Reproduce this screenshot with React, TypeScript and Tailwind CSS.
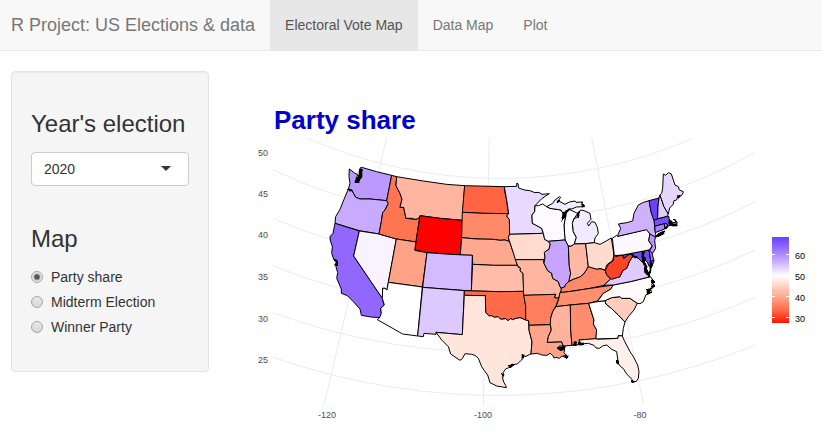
import React from "react";

type Region = { id: string; fill: string; d: string };

// State outlines, drawn on a grid of three units to the pixel.
const regions: Region[] = [
  { id: "WA", fill: "#bb99ff", d: "1048,507 1065,520 1073,523 1070,534 1067,546 1074,548 1081,534 1083,520 1080,504 1085,502 1130,515 1175,526 1168,564 1160,602 1110,597 1080,597 1067,592 1060,580 1055,570 1045,568 1050,550 1047,530" },
  { id: "OR", fill: "#c8aaff", d: "1045,568 1055,570 1060,580 1067,592 1080,597 1110,597 1160,602 1165,610 1155,630 1148,638 1144,665 1137,702 1078,692 1005,670 1007,650 1020,628 1032,598 1043,572" },
  { id: "CA", fill: "#9167ff", d: "1005,670 1078,693 1061,768 1147,895 1153,915 1142,925 1144,940 1139,953 1112,951 1084,946 1080,927 1060,905 1042,887 1024,880 1024,868 1019,855 1010,835 1013,818 1008,800 1004,795 1009,787 1002,780 995,760 997,740 991,722 990,710 999,700" },
  { id: "NV", fill: "#f8f3ff", d: "1078,693 1137,702 1189,717 1165,847 1161,870 1155,865 1148,865 1147,895 1061,768" },
  { id: "ID", fill: "#ff7551", d: "1175,526 1190,530 1188,557 1200,580 1206,598 1200,622 1211,622 1218,655 1245,658 1254,656 1256,647 1260,647 1248,726 1189,717 1137,702 1144,665 1148,638 1155,630 1165,610 1160,602" },
  { id: "MT", fill: "#ffb59f", d: "1190,530 1270,543 1340,553 1394,557 1387,661 1320,655 1260,647 1255,656 1245,658 1237,655 1218,655 1211,622 1200,622 1206,598 1200,580 1188,557" },
  { id: "WY", fill: "#ff0000", d: "1260,647 1320,655 1387,661 1381,766 1280,757 1244,750" },
  { id: "ND", fill: "#ff6542", d: "1394,557 1513,560 1514,574 1520,600 1523,625 1526,641 1450,640 1387,637" },
  { id: "SD", fill: "#ff8a6a", d: "1387,637 1450,640 1526,641 1520,648 1528,658 1529,703 1525,712 1529,725 1515,720 1500,721 1480,718 1430,717 1385,713" },
  { id: "NE", fill: "#ffaa90", d: "1385,713 1430,717 1480,718 1500,721 1515,720 1529,725 1540,758 1548,778 1552,796 1480,796 1418,793 1417,766 1381,765" },
  { id: "UT", fill: "#ffa286", d: "1189,717 1248,726 1244,751 1281,758 1267,861 1165,847" },
  { id: "CO", fill: "#d4bbff", d: "1281,758 1350,763 1417,766 1414,873 1268,862" },
  { id: "AZ", fill: "#ffffff", d: "1165,847 1267,861 1253,1008 1208,1002 1132,959 1139,953 1144,940 1142,925 1153,915 1147,895 1148,865 1155,865 1161,870" },
  { id: "NM", fill: "#ddc8ff", d: "1268,862 1393,872 1387,1004 1308,997 1308,1003 1272,1000 1270,1010 1253,1008" },
  { id: "KS", fill: "#ffbda9", d: "1418,793 1480,796 1552,796 1555,802 1562,805 1560,812 1569,820 1571,874 1500,875 1414,873" },
  { id: "OK", fill: "#ff6b49", d: "1393,872 1500,875 1571,874 1577,918 1577,960 1560,953 1545,956 1538,959 1532,956 1524,962 1517,956 1502,958 1494,950 1483,952 1475,947 1468,948 1457,938 1456,887 1393,886" },
  { id: "TX", fill: "#ffe5dc", d: "1393,886 1456,887 1457,938 1468,948 1475,947 1483,952 1494,950 1502,958 1517,956 1524,962 1532,956 1538,959 1545,956 1560,953 1577,960 1586,962 1587,990 1596,1025 1593,1062 1575,1070 1570,1066 1570,1075 1562,1082 1552,1092 1538,1094 1530,1102 1518,1106 1509,1118 1512,1125 1507,1132 1512,1148 1517,1156 1519,1163 1508,1161 1490,1158 1470,1148 1463,1125 1453,1112 1445,1100 1435,1075 1425,1066 1415,1063 1395,1061 1387,1076 1380,1081 1352,1062 1345,1040 1325,1020 1308,997 1387,1004" },
  { id: "MN", fill: "#e9d9ff", d: "1513,560 1550,559 1550,550 1554,551 1556,564 1573,570 1590,572 1605,578 1617,577 1626,583 1648,581 1625,596 1605,617 1604,635 1596,645 1597,670 1607,675 1625,685 1630,700 1529,703 1528,658 1520,648 1526,641 1520,600" },
  { id: "IA", fill: "#ffdace", d: "1529,703 1630,700 1634,718 1645,724 1651,732 1647,748 1633,757 1635,773 1630,779 1546,779 1540,758 1529,725 1525,712" },
  { id: "MO", fill: "#ffb59f", d: "1546,779 1630,779 1632,790 1643,812 1655,820 1658,835 1675,845 1680,860 1685,868 1680,880 1676,895 1663,893 1667,883 1630,885 1571,886 1569,820 1560,812 1562,805 1553,797" },
  { id: "WI", fill: "#fcfaff", d: "1605,617 1615,617 1628,612 1640,620 1650,625 1683,630 1690,640 1686,655 1693,652 1697,646 1692,675 1695,720 1645,724 1634,718 1630,700 1625,685 1607,675 1597,670 1596,645 1604,635" },
  { id: "UP", fill: "#f2eaff", d: "1640,620 1658,610 1665,600 1678,590 1682,592 1671,607 1678,604 1695,613 1708,606 1725,603 1728,607 1748,606 1745,614 1753,620 1730,621 1715,627 1705,627 1702,635 1690,642 1683,630 1650,625" },
  { id: "MI", fill: "#f2eaff", d: "1723,732 1729,712 1720,695 1717,670 1722,656 1732,652 1733,638 1743,630 1752,632 1770,640 1773,658 1762,670 1766,678 1775,665 1785,667 1792,682 1795,700 1785,714 1783,728 1755,731" },
  { id: "IL", fill: "#c7a4ff", d: "1645,724 1695,720 1705,738 1708,800 1712,820 1708,845 1697,853 1694,861 1684,864 1680,860 1675,845 1658,835 1655,820 1643,812 1632,790 1635,773 1633,757 1647,748 1651,732" },
  { id: "IN", fill: "#ffb8a3", d: "1705,738 1713,739 1723,732 1757,731 1765,800 1758,812 1750,823 1740,831 1727,836 1720,838 1706,845 1712,820 1708,800" },
  { id: "OH", fill: "#ffdace", d: "1757,731 1783,728 1800,733 1815,725 1834,714 1842,765 1838,781 1820,795 1816,810 1800,806 1790,808 1765,801" },
  { id: "KY", fill: "#ff8a6a", d: "1684,864 1694,861 1697,853 1706,845 1720,838 1740,831 1750,823 1758,812 1765,800 1790,808 1800,806 1816,811 1820,825 1832,837 1812,856 1765,866 1720,873 1683,878" },
  { id: "TN", fill: "#ff906f", d: "1680,878 1720,873 1765,866 1840,855 1832,868 1810,880 1792,903 1766,910 1711,915 1668,920 1676,897" },
  { id: "AR", fill: "#ff7f5e", d: "1571,886 1667,883 1663,893 1676,895 1668,918 1658,935 1652,955 1651,974 1587,976 1586,962 1577,960 1577,918" },
  { id: "LA", fill: "#ffa48a", d: "1587,976 1651,974 1654,990 1645,1010 1642,1027 1685,1025 1690,1038 1678,1038 1672,1046 1683,1050 1694,1048 1692,1058 1700,1066 1697,1073 1686,1068 1678,1075 1668,1072 1662,1074 1658,1066 1650,1060 1641,1066 1625,1065 1612,1060 1593,1062 1596,1025 1587,990" },
  { id: "MS", fill: "#ffb39c", d: "1668,920 1711,915 1712,990 1716,1036 1690,1038 1685,1025 1642,1027 1645,1010 1654,990 1651,974 1652,955 1658,935" },
  { id: "AL", fill: "#ff8d6e", d: "1711,915 1766,910 1772,930 1782,960 1780,972 1790,990 1788,1017 1737,1020 1743,1030 1730,1036 1725,1024 1721,1036 1716,1036 1712,990" },
  { id: "GA", fill: "#fffefe", d: "1766,910 1792,905 1815,902 1818,912 1835,926 1855,945 1875,966 1870,985 1867,1008 1855,1007 1854,1015 1792,1017 1788,1013 1790,990 1780,972 1782,960" },
  { id: "FL", fill: "#fff0eb", d: "1737,1020 1788,1016 1792,1018 1854,1015 1855,1007 1867,1008 1873,1022 1890,1055 1900,1070 1913,1095 1917,1115 1915,1135 1909,1144 1898,1147 1896,1138 1880,1122 1870,1106 1862,1100 1855,1090 1853,1077 1850,1055 1835,1048 1820,1035 1808,1038 1798,1045 1788,1044 1782,1036 1765,1030 1743,1032" },
  { id: "SC", fill: "#ffcdbd", d: "1815,902 1835,893 1860,890 1865,895 1890,895 1912,910 1902,930 1885,950 1875,966 1855,945 1835,926 1818,912" },
  { id: "NC", fill: "#fff9f7", d: "1840,855 1895,844 1951,830 1960,842 1955,854 1962,860 1950,866 1955,875 1938,884 1930,905 1920,911 1912,910 1890,895 1865,895 1860,890 1835,893 1815,902 1792,905 1810,880 1832,868" },
  { id: "VA", fill: "#e0cbff", d: "1812,856 1832,837 1860,830 1868,812 1880,805 1888,785 1900,766 1915,775 1928,785 1934,800 1934,818 1951,830 1895,844 1840,855" },
  { id: "WV", fill: "#ff4325", d: "1842,752 1846,770 1868,765 1871,775 1888,762 1900,766 1888,785 1880,805 1868,812 1860,830 1835,838 1820,825 1816,811 1825,793 1840,782 1842,765" },
  { id: "MD", fill: "#754aff", d: "1868,765 1947,749 1952,782 1962,782 1955,802 1948,800 1941,785 1930,778 1928,788 1915,775 1900,766 1888,762 1871,775" },
  { id: "DE", fill: "#9a74ff", d: "1947,749 1954,752 1962,782 1952,782" },
  { id: "PA", fill: "#fbf8ff", d: "1837,715 1850,706 1853,709 1940,688 1950,702 1946,722 1957,738 1947,750 1868,765 1843,767" },
  { id: "NJ", fill: "#bb98ff", d: "1950,702 1967,709 1964,722 1967,745 1958,760 1949,752 1957,738 1946,722" },
  { id: "NY", fill: "#cdb1ff", d: "1853,706 1862,685 1855,672 1880,668 1898,663 1902,640 1915,615 1930,607 1948,602 1953,635 1963,662 1964,682 1967,704 1964,710 1950,702 1940,689 1853,709" },
  { id: "VT", fill: "#6c40ff", d: "1947,602 1977,594 1974,620 1973,656 1961,660 1953,635" },
  { id: "NH", fill: "#e1ceff", d: "1977,594 1980,585 1992,620 2005,642 1999,650 1973,656 1974,620" },
  { id: "MA", fill: "#784fff", d: "1962,660 1999,650 2006,648 2008,660 2018,668 2027,667 2025,659 2032,668 2028,675 2012,675 2006,678 1998,670 1964,679" },
  { id: "CT", fill: "#a781ff", d: "1964,679 1993,671 1994,687 1966,698" },
  { id: "RI", fill: "#a781ff", d: "1993,671 1998,670 2004,678 2001,684 1994,687" },
  { id: "ME", fill: "#e5d5ff", d: "1980,585 1985,580 1988,565 1990,522 1997,526 2005,518 2014,522 2025,555 2035,560 2038,570 2050,575 2047,584 2037,592 2034,586 2030,600 2022,602 2019,614 2009,624 2005,642 1992,620" },
];

// Bays, sounds and islands where the coast is too dense to show as a line.
const inlets = [
  "1064,548 1068,534 1075,530 1076,520 1078,508 1087,508 1087,532 1081,537 1077,549",
  "1003,778 1012,779 1014,798 1004,796 1009,787",
  "1083,505 1090,512 1081,514",
  "1688,638 1701,630 1712,626 1706,634 1697,638 1699,650 1690,656 1685,666 1688,650",
  "1673,600 1681,602 1671,610",
  "1733,640 1740,632 1736,653 1730,652",
  "1744,608 1756,617 1747,622",
  "1524,1097 1538,1091 1545,1094 1532,1103",
  "1565,1063 1574,1064 1566,1078",
  "1504,1120 1512,1123 1509,1133",
  "1672,1042 1697,1038 1693,1049 1680,1053",
  "1690,1065 1706,1068 1700,1077",
  "1722,1025 1730,1026 1728,1038 1720,1036",
  "1734,1027 1752,1029 1751,1035 1737,1036",
  "1848,1080 1857,1083 1855,1094 1849,1089",
  "1894,1140 1905,1145 1895,1149",
  "1926,754 1935,756 1931,766 1938,776 1934,786 1942,800 1940,806 1950,822 1941,825 1932,808 1936,800 1928,785 1925,770",
  "1949,782 1957,790 1952,820 1947,824 1950,803",
  "1936,816 1950,824 1946,832",
  "1955,836 1966,846 1960,850 1966,858 1956,866 1953,858 1961,855 1954,848",
  "1939,868 1957,865 1948,876 1957,878 1942,884",
  "1967,707 1980,697 1995,692 1992,702 1980,708 1967,713",
  "2008,658 2016,664 2020,674 2030,671 2033,678 2018,679 2008,676 2005,668",
  "1993,681 2004,678 2000,688",
  "2018,659 2026,657 2027,661",
  "2032,588 2042,585 2036,596",
  "1041,568 1050,566 1058,573 1050,574",
  "1895,760 1902,768 1913,770 1908,775 1897,771",
];

const yTicks = [
  { label: "50", y: 156 },
  { label: "45", y: 197 },
  { label: "40", y: 238 },
  { label: "35", y: 280 },
  { label: "30", y: 322 },
  { label: "25", y: 363 },
];

const xTicks = [
  { label: "-120", x: 327 },
  { label: "-100", x: 483 },
  { label: "-80", x: 640 },
];

const legendTicks = [
  { label: "60", y: 254 },
  { label: "50", y: 275 },
  { label: "40", y: 296 },
  { label: "30", y: 317 },
];

const tabs = ["Electoral Vote Map", "Data Map", "Plot"];
const mapOptions = ["Party share", "Midterm Election", "Winner Party"];

function Navbar() {
  return (
    <nav className="flex h-[51px] items-stretch border-b border-[#e7e7e7] bg-[#f8f8f8] text-sm text-[#777]">
      <a href="#home" className="flex items-center pr-[15px] pl-[11px] text-lg whitespace-nowrap">
        R Project: US Elections &amp; data
      </a>
      {tabs.map((tab, i) => (
        <a
          key={tab}
          href={"#tab-" + i}
          className={
            i === 0
              ? "flex items-center bg-[#e7e7e7] px-[15px] whitespace-nowrap text-[#555]"
              : "flex items-center px-[15px] whitespace-nowrap"
          }
        >
          {tab}
        </a>
      ))}
    </nav>
  );
}

function Sidebar() {
  const [choice, setChoice] = React.useState(mapOptions[0]);
  return (
    <form className="w-[198px] shrink-0 rounded border border-[#e3e3e3] bg-[#f5f5f5] px-[19px] pt-[39px] pb-[34px] shadow-[inset_0_1px_1px_rgba(0,0,0,0.05)]">
      <h3 className="text-2xl leading-[26px]">
        <label htmlFor="year">Year's election</label>
      </h3>
      <div className="relative mt-[15px]">
        <select
          id="year"
          defaultValue="2020"
          className="h-[34px] w-full appearance-none rounded border border-[#ccc] bg-white px-3 text-sm text-[#333]"
        >
          <option>2020</option>
          <option>2016</option>
        </select>
        <svg className="pointer-events-none absolute top-[14px] right-[18px]" width="10" height="5" viewBox="0 0 10 5">
          <path d="M0 0H10L5 5Z" fill="#333" />
        </svg>
      </div>
      <fieldset className="mt-10">
        <legend className="text-2xl leading-[26px]">Map</legend>
        <div className="mt-[15px] flex flex-col gap-[5px]">
          {mapOptions.map((option) => (
            <label key={option} className="flex items-center gap-2 text-sm leading-5">
              <input
                type="radio"
                name="map"
                value={option}
                checked={choice === option}
                onChange={() => setChoice(option)}
                className="h-3 w-3 appearance-none rounded-full border border-[#a6a6a6] bg-linear-to-b from-[#e8e8e8] to-[#d8d8d8] checked:bg-[radial-gradient(circle,#555_0,#555_2px,#e6e6e6_4px)]"
              />
              {option}
            </label>
          ))}
        </div>
      </fieldset>
    </form>
  );
}

function ElectionMap() {
  return (
    <svg
      className="block w-full font-['Liberation_Sans',Arial,sans-serif]"
      viewBox="240 136 582 290"
      role="img"
      aria-label="Party share by state"
    >
      <defs>
        <linearGradient id="share" x1="0" y1="0" x2="0" y2="1">
          <stop offset="0" stopColor="#6a40ff" />
          <stop offset="0.15" stopColor="#9c75ff" />
          <stop offset="0.3" stopColor="#cfb5ff" />
          <stop offset="0.45" stopColor="#ffffff" />
          <stop offset="0.58" stopColor="#ffd0c1" />
          <stop offset="0.72" stopColor="#ff9f83" />
          <stop offset="0.86" stopColor="#ff6542" />
          <stop offset="1" stopColor="#ff1505" />
        </linearGradient>
      </defs>
      <g transform="scale(0.333333)">
        <g fill="none" stroke="#ebebeb" strokeWidth="3">
          <path d="M923 415A1447 1447 0 0 0 2078 415" />
          <path d="M820 510A1567 1567 0 0 0 2266 457" />
          <path d="M820 655A1687 1687 0 0 0 2266 605" />
          <path d="M820 798A1807 1807 0 0 0 2266 750" />
          <path d="M820 938A1927 1927 0 0 0 2266 892" />
          <path d="M820 1072A2046 2046 0 0 0 2266 1035" />
          <path d="M1160 413L973 1213M1468 413L1450 1213M1775 413L1930 1213" />
        </g>
        <g stroke="#000" strokeWidth="3" strokeLinejoin="round" shapeRendering="crispEdges">
          <polygon fill="#fff" points="1695,720 1705,738 1713,739 1723,732 1729,712 1720,695 1717,670 1722,656 1733,640 1705,627 1697,646 1692,675" />
          {regions.map((r) => (
            <polygon key={r.id} points={r.d} fill={r.fill} />
          ))}
        </g>
        <g fill="#000" stroke="#000" strokeWidth="1" shapeRendering="crispEdges">
          {inlets.map((d) => (
            <polygon key={d} points={d} />
          ))}
        </g>
      </g>
      <g fill="#4d4d4d" fontSize="9">
        {yTicks.map((t) => (
          <text key={t.label} x="268" y={t.y} textAnchor="end">
            {t.label}
          </text>
        ))}
        {xTicks.map((t) => (
          <text key={t.label} x={t.x} y="418" textAnchor="middle">
            {t.label}
          </text>
        ))}
      </g>
      <rect x="772" y="237" width="17" height="86" fill="url(#share)" />
      {legendTicks.map((t) => (
        <g key={t.label}>
          <path d={`M772 ${t.y}h3v1h-3zM786 ${t.y}h3v1h-3z`} fill="#fff" />
          <text x="795" y={t.y + 5} fontSize="9" fill="#000">
            {t.label}
          </text>
        </g>
      ))}
    </svg>
  );
}

export default function App() {
  return (
    <div className="min-h-screen bg-white font-['Liberation_Sans',Arial,sans-serif] text-[#333]">
      <Navbar />
      <div className="flex items-start gap-[31px] pt-5 pl-[11px]">
        <Sidebar />
        <main className="min-w-0 flex-1 pt-[33px]">
          <h2 className="pl-[34px] text-[26px] leading-8 font-bold text-[#0000cd]">Party share</h2>
          <ElectionMap />
        </main>
      </div>
    </div>
  );
}
